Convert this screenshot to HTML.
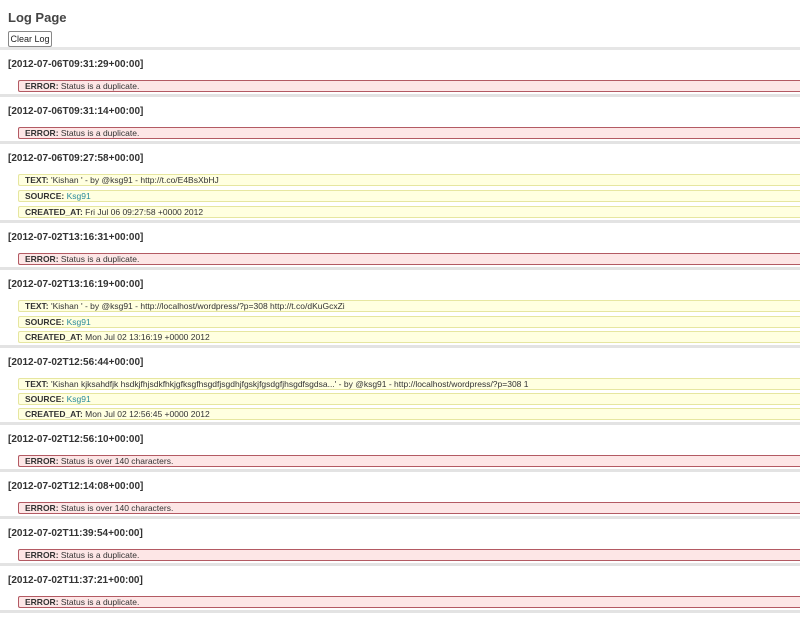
<!DOCTYPE html>
<html><head><meta charset="utf-8"><style>
*{margin:0;padding:0;box-sizing:border-box}
body{width:800px;height:621px;overflow:hidden;background:#fff;font-family:"Liberation Sans",Arial,sans-serif;color:#333}
h2{position:absolute;left:8px;top:9px;font-size:13px;font-weight:bold;color:#444;line-height:18px}
button{position:absolute;left:8px;top:31px;height:16px;width:44px;font:9px "Liberation Sans",Arial,sans-serif;color:#222;background:#fff;border:1px solid #888;border-radius:2px;padding:0}
#list{position:absolute;left:0;top:47px;width:800px;border-top:3px solid #e6e6e6}
.e{border-bottom:3px solid #e3e3e3;padding-top:7px;padding-bottom:2px}
.h{font-size:10px;font-weight:bold;color:#333;line-height:16px;padding-left:8px;margin-bottom:7px}
.b{margin-left:18px;height:12px;line-height:10px;font-size:8.5px;padding-left:6px;white-space:nowrap;overflow:hidden;border-radius:2px 0 0 2px}
.b b{color:#333}
.r{background:#fde6e6;border:1px solid #b35a63;border-right:none}
.y{background:#ffffe0;border:1px solid #e6e6a0;border-right:none;margin-bottom:4px}
.y:last-child{margin-bottom:0}
.m3 .y{margin-bottom:3px}
.m3 .y:last-child{margin-bottom:0}
a{color:#2a8a9a;text-decoration:none}
</style></head><body>
<h2>Log Page</h2>
<button>Clear Log</button>
<div id="list">
<div class="e"><div class="h">[2012-07-06T09:31:29+00:00]</div><div class="b r"><b>ERROR:</b> Status is a duplicate.</div></div>
<div class="e"><div class="h">[2012-07-06T09:31:14+00:00]</div><div class="b r"><b>ERROR:</b> Status is a duplicate.</div></div>
<div class="e"><div class="h">[2012-07-06T09:27:58+00:00]</div>
<div class="b y"><b>TEXT:</b> 'Kishan ' - by @ksg91 - http://t.co/E4BsXbHJ</div>
<div class="b y"><b>SOURCE:</b> <a>Ksg91</a></div>
<div class="b y"><b>CREATED_AT:</b> Fri Jul 06 09:27:58 +0000 2012</div></div>
<div class="e"><div class="h">[2012-07-02T13:16:31+00:00]</div><div class="b r"><b>ERROR:</b> Status is a duplicate.</div></div>
<div class="e"><div class="h">[2012-07-02T13:16:19+00:00]</div>
<div class="b y"><b>TEXT:</b> 'Kishan ' - by @ksg91 - http://localhost/wordpress/?p=308 http://t.co/dKuGcxZi</div>
<div class="b y"><b>SOURCE:</b> <a>Ksg91</a></div>
<div class="b y" style="margin-top:-1px"><b>CREATED_AT:</b> Mon Jul 02 13:16:19 +0000 2012</div></div>
<div class="e m3"><div class="h">[2012-07-02T12:56:44+00:00]</div>
<div class="b y"><b>TEXT:</b> 'Kishan kjksahdfjk hsdkjfhjsdkfhkjgfksgfhsgdfjsgdhjfgskjfgsdgfjhsgdfsgdsa...' - by @ksg91 - http://localhost/wordpress/?p=308 1</div>
<div class="b y"><b>SOURCE:</b> <a>Ksg91</a></div>
<div class="b y"><b>CREATED_AT:</b> Mon Jul 02 12:56:45 +0000 2012</div></div>
<div class="e"><div class="h">[2012-07-02T12:56:10+00:00]</div><div class="b r"><b>ERROR:</b> Status is over 140 characters.</div></div>
<div class="e"><div class="h">[2012-07-02T12:14:08+00:00]</div><div class="b r"><b>ERROR:</b> Status is over 140 characters.</div></div>
<div class="e"><div class="h">[2012-07-02T11:39:54+00:00]</div><div class="b r"><b>ERROR:</b> Status is a duplicate.</div></div>
<div class="e"><div class="h">[2012-07-02T11:37:21+00:00]</div><div class="b r"><b>ERROR:</b> Status is a duplicate.</div></div>
</div>
</body></html>
